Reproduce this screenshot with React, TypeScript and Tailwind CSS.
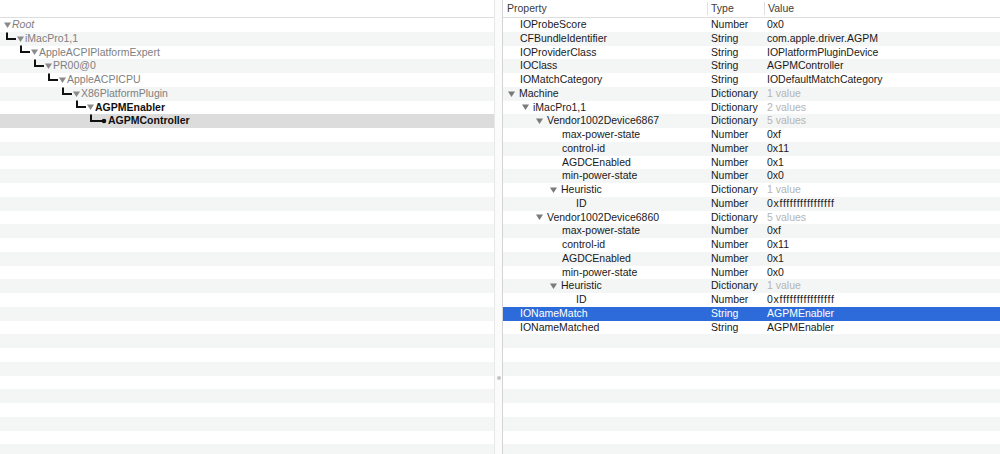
type TreeNode = {
  label: string;
  depth: number;
  bold?: boolean;
  italic?: boolean;
  leaf?: boolean;
  selected?: boolean;
};

type PropRow = {
  name: string;
  type: string;
  value: string;
  depth: number;
  expandable?: boolean;
  muted?: boolean;
  selected?: boolean;
};

const tree: TreeNode[] = [
  { label: "Root", depth: 0, italic: true },
  { label: "iMacPro1,1", depth: 1 },
  { label: "AppleACPIPlatformExpert", depth: 2 },
  { label: "PR00@0", depth: 3 },
  { label: "AppleACPICPU", depth: 4 },
  { label: "X86PlatformPlugin", depth: 5 },
  { label: "AGPMEnabler", depth: 6, bold: true },
  { label: "AGPMController", depth: 7, bold: true, leaf: true, selected: true },
];

const props: PropRow[] = [
  { name: "IOProbeScore", type: "Number", value: "0x0", depth: 0 },
  { name: "CFBundleIdentifier", type: "String", value: "com.apple.driver.AGPM", depth: 0 },
  { name: "IOProviderClass", type: "String", value: "IOPlatformPluginDevice", depth: 0 },
  { name: "IOClass", type: "String", value: "AGPMController", depth: 0 },
  { name: "IOMatchCategory", type: "String", value: "IODefaultMatchCategory", depth: 0 },
  { name: "Machine", type: "Dictionary", value: "1 value", depth: 0, expandable: true, muted: true },
  { name: "iMacPro1,1", type: "Dictionary", value: "2 values", depth: 1, expandable: true, muted: true },
  { name: "Vendor1002Device6867", type: "Dictionary", value: "5 values", depth: 2, expandable: true, muted: true },
  { name: "max-power-state", type: "Number", value: "0xf", depth: 3 },
  { name: "control-id", type: "Number", value: "0x11", depth: 3 },
  { name: "AGDCEnabled", type: "Number", value: "0x1", depth: 3 },
  { name: "min-power-state", type: "Number", value: "0x0", depth: 3 },
  { name: "Heuristic", type: "Dictionary", value: "1 value", depth: 3, expandable: true, muted: true },
  { name: "ID", type: "Number", value: "0xffffffffffffffff", depth: 4 },
  { name: "Vendor1002Device6860", type: "Dictionary", value: "5 values", depth: 2, expandable: true, muted: true },
  { name: "max-power-state", type: "Number", value: "0xf", depth: 3 },
  { name: "control-id", type: "Number", value: "0x11", depth: 3 },
  { name: "AGDCEnabled", type: "Number", value: "0x1", depth: 3 },
  { name: "min-power-state", type: "Number", value: "0x0", depth: 3 },
  { name: "Heuristic", type: "Dictionary", value: "1 value", depth: 3, expandable: true, muted: true },
  { name: "ID", type: "Number", value: "0xffffffffffffffff", depth: 4 },
  { name: "IONameMatch", type: "String", value: "AGPMEnabler", depth: 0, selected: true },
  { name: "IONameMatched", type: "String", value: "AGPMEnabler", depth: 0 },
];

const ROWS = 32;

function Triangle({ color = "#8a8a8a" }: { color?: string }) {
  return (
    <svg width="8" height="8" viewBox="0 0 8 8" className="shrink-0">
      <polygon points="0,1.5 7,1.5 3.5,7" fill={color} />
    </svg>
  );
}

function Connector({ leaf }: { leaf?: boolean }) {
  if (leaf) {
    return (
      <svg width="19" height="14" viewBox="0 0 19 14" className="shrink-0">
        <path d="M2 0.5 V7 H14" stroke="#111" strokeWidth="2" fill="none" />
        <circle cx="15" cy="7" r="2.3" fill="#111" />
      </svg>
    );
  }
  return (
    <svg width="12" height="14" viewBox="0 0 12 14" className="shrink-0">
      <path d="M2 0.5 V7 H11" stroke="#111" strokeWidth="2" fill="none" />
    </svg>
  );
}

function stripe(i: number) {
  return i % 2 === 1 ? "bg-[#f4f5f5]" : "bg-white";
}

export default function App() {
  return (
    <div className="flex h-[454px] w-[1000px] overflow-hidden bg-white font-['Liberation_Sans',Arial,sans-serif] text-[10.5px] text-[#1a1a1a]">
      {/* Left: registry tree */}
      <div className="flex w-[494px] shrink-0 flex-col">
        <div className="h-[18px] shrink-0 border-b border-[#dedede] bg-white" />
        {Array.from({ length: ROWS }).map((_, i) => {
          const node = tree[i];
          if (!node) return <div key={i} className={`h-[13.75px] shrink-0 ${stripe(i)}`} />;
          return (
            <div
              key={i}
              className={`flex h-[13.75px] shrink-0 items-center ${node.selected ? "bg-[#dcdcdc]" : stripe(i)}`}
              style={{ paddingLeft: node.depth === 0 ? 4 : 5 + 14 * (node.depth - 1) }}
            >
              {node.depth > 0 && <Connector leaf={node.leaf} />}
              {!node.leaf && <Triangle />}
              <span
                className={`whitespace-nowrap ${node.italic ? "italic" : ""} ${
                  node.bold ? "font-bold text-[#111]" : "text-[#808080]"
                }`}
              >
                {node.label}
              </span>
            </div>
          );
        })}
      </div>

      {/* Split view divider */}
      <div className="relative w-[9px] shrink-0 border-l border-r border-l-[#e8e8e8] border-r-[#d4d4d4] bg-[#fbfbfb]">
        <div className="absolute left-[2px] top-[376px] h-[4px] w-[4px] rounded-full bg-[#c4c4c4]" />
      </div>

      {/* Right: property table */}
      <div className="flex min-w-0 flex-1 flex-col">
        <div className="flex h-[18px] shrink-0 items-center border-b border-[#dedede] bg-white text-[#3c3c3c]">
          <div className="w-[204px] shrink-0 pl-[4px]">Property</div>
          <div className="flex h-full w-[57px] shrink-0 items-center">
            <div className="h-[13px] border-l border-[#e0e0e0]" />
            <span className="pl-[3px]">Type</span>
          </div>
          <div className="flex h-full flex-1 items-center">
            <div className="h-[13px] border-l border-[#e0e0e0]" />
            <span className="pl-[3px]">Value</span>
          </div>
        </div>
        {Array.from({ length: ROWS }).map((_, i) => {
          const row = props[i];
          if (!row) return <div key={i} className={`h-[13.75px] shrink-0 ${stripe(i)}`} />;
          const sel = row.selected;
          return (
            <div
              key={i}
              className={`flex h-[13.75px] shrink-0 items-center whitespace-nowrap ${
                sel ? "bg-[#2c6bd9] text-white" : stripe(i)
              }`}
            >
              <div
                className="flex w-[204px] shrink-0 items-center"
                style={{ paddingLeft: row.expandable ? 5 + 14 * row.depth : 17 + 14 * row.depth }}
              >
                {row.expandable && (
                  <span className="mr-[3px] flex">
                    <Triangle color="#7a7a7a" />
                  </span>
                )}
                <span>{row.name}</span>
              </div>
              <div className="w-[57px] shrink-0 pl-[4px]">{row.type}</div>
              <div
                className={`flex-1 pl-[3px] ${row.muted ? "text-[#b4b4b4]" : ""} ${
                  row.value.startsWith("0xffff") ? "tracking-[0.7px]" : ""
                }`}
              >
                {row.value}
              </div>
            </div>
          );
        })}
      </div>
    </div>
  );
}
